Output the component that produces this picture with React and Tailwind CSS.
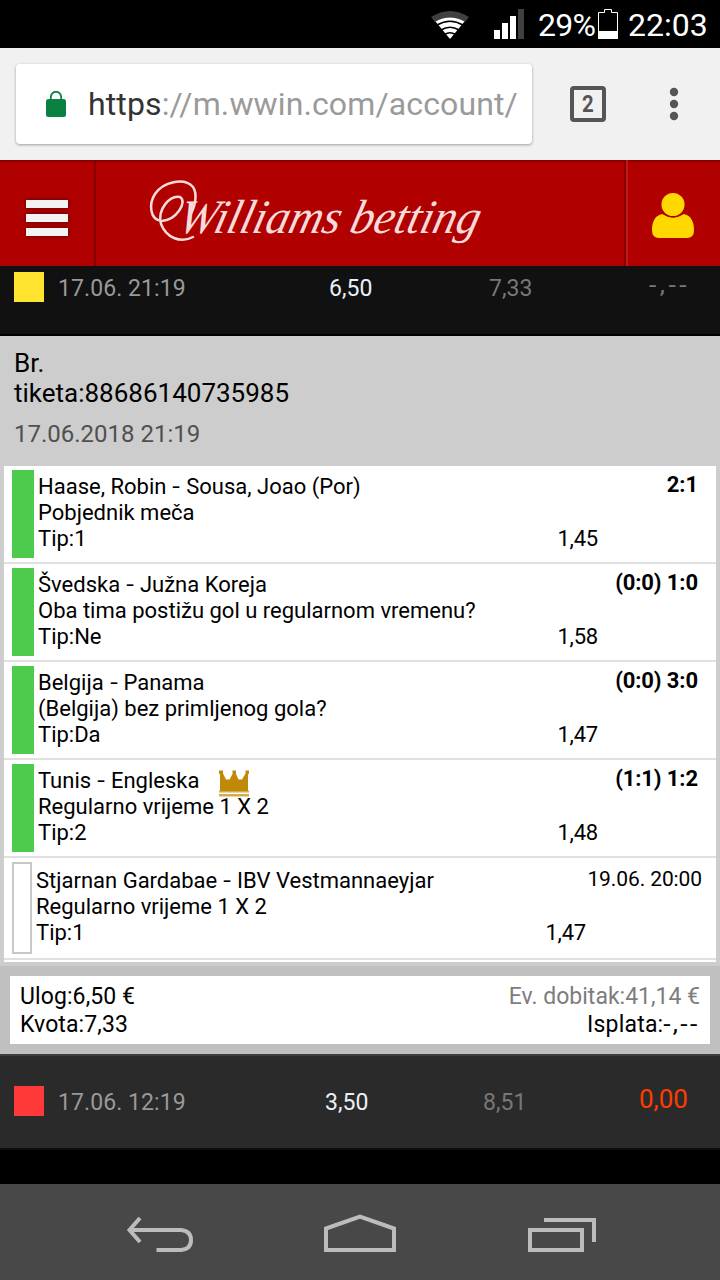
import React from 'react';

const bets = [
    { id: 1, match: "Haase, Robin - Sousa, Joao (Por)", game: "Pobjednik meča", tip: "1", odd: "1,45", result: "2:1" },
    { id: 2, match: "Švedska - Južna Koreja", game: "Oba tima postižu gol u regularnom vremenu?", tip: "Ne", odd: "1,58", result: "(0:0) 1:0" },
    { id: 3, match: "Belgija - Panama", game: "(Belgija) bez primljenog gola?", tip: "Da", odd: "1,47", result: "(0:0) 3:0" },
    { id: 4, match: "Tunis - Engleska", game: "Regularno vrijeme 1 X 2", tip: "2", odd: "1,48", result: "(1:1) 1:2", crown: true },
    { id: 5, match: "Stjarnan Gardabae - IBV Vestmannaeyjar", game: "Regularno vrijeme 1 X 2", tip: "1", odd: "1,47", date: "19.06. 20:00" },
];

function StatusBar() {
    return (
        <div className="flex h-12 bg-black text-white">
            <svg className="ml-[430px] h-12 w-[106px] shrink-0" viewBox="430 0 106 48">
                <path d="M431 17Q450 5 469 17L465 22Q450 13 435 22Z" fill="#404040" />
                <path d="M450 39L435.500 21.500Q450 13.500 464.500 21.500Z" fill="#fff" />
                <path d="M437 25Q450 17.500 463 25M441 30Q450 24.500 459 30M444.500 34.500Q450 31 455.500 34.500" fill="none" stroke="#000" strokeWidth="1.500" />
                <path d="M494 30h6v9h-6zM502 23h6v16h-6zM510 16h6v23h-6z" fill="#fff" />
                <path d="M518 9h6v30h-6z" fill="#404040" />
            </svg>
            <span className="ml-[2px] w-[59px] whitespace-nowrap text-[32px] leading-[50px] tracking-[-0.7px]">29%</span>
            <svg className="h-12 w-[22px] shrink-0" viewBox="597 0 22 48">
                <path d="M598.500 38.500v-26h6v-3h7v3h6v26z" fill="none" stroke="#fff" />
                <path d="M598 31h20v8h-20z" fill="#fff" />
            </svg>
            <span className="ml-[9px] whitespace-nowrap text-[32px] leading-[50px]">22:03</span>
        </div>
    );
}

function BrowserBar() {
    return (
        <div className="flex h-28 items-center bg-[#f1f1f1] pl-4">
            <div className="flex h-20 w-[516px] items-center rounded bg-white pl-[30px] shadow-[0_1px_3px_rgba(0,0,0,0.35)]">
                <svg className="h-[26px] w-5 shrink-0" viewBox="0 0 20 26">
                    <path d="M4.800 10V6a5.200 5.200 0 0 1 10.400 0v4" fill="none" stroke="#0b8043" strokeWidth="1.800" />
                    <rect y="8" width="20" height="18" rx="2.500" fill="#0b8043" />
                </svg>
                <div className="ml-[22px] whitespace-nowrap text-[32px] leading-10 tracking-[0.12px] text-[#9a9a9a]">
                    <span className="text-[#333]">https</span>://m.wwin.com/account/
                </div>
            </div>
            <div className="ml-[38px] flex h-9 w-9 items-center justify-center rounded-[4px] border-4 border-[#555] text-[24px] font-bold leading-none text-[#555]">
                <span className="scale-x-[0.85]">2</span>
            </div>
            <svg className="ml-[63px] h-9 w-2.5" viewBox="0 0 10 36" fill="#555">
                <circle cx="5" cy="6" r="4.200" />
                <circle cx="5" cy="18" r="4.200" />
                <circle cx="5" cy="30" r="4.200" />
            </svg>
        </div>
    );
}

function Header() {
    return (
        <div className="flex h-[106px] bg-[#b00000] shadow-[inset_0_2px_1px_#8a0000]">
            <button className="flex w-24 flex-col gap-[6px] border-r-2 border-[#850000] pl-[26px] pt-10">
                <span className="h-2 w-[42px] bg-[#f3f3f3] shadow-[0_0_4px_rgba(60,0,0,0.8)]" />
                <span className="h-2 w-[42px] bg-[#f3f3f3] shadow-[0_0_4px_rgba(60,0,0,0.8)]" />
                <span className="h-2 w-[42px] bg-[#f3f3f3] shadow-[0_0_4px_rgba(60,0,0,0.8)]" />
            </button>
            <svg className="h-[106px] w-[528px] shrink-0" viewBox="96 160 528 106" fill="#f7dada">
                <path d="M193 237C180 244 166 237 161 224C157 209 170 195 180 197C188 202 176 220 162 221C149 220 149 203 155 194C163 182 184 177 193 187C198 194 195 208 189 217" fill="none" stroke="#f7dada" strokeWidth="2.500" strokeLinecap="round" />
                <g transform="translate(0 233) skewX(-14)" className="font-['Liberation_Serif',serif] text-[48px] italic">
                    <text x="176" textLength="162" lengthAdjust="spacingAndGlyphs">Williams</text>
                    <text x="348" textLength="129" lengthAdjust="spacingAndGlyphs">betting</text>
                </g>
            </svg>
            <div className="flex flex-1 border-l-2 border-[#850000] shadow-[inset_2px_0_0_#c51616]">
                <svg className="ml-[25px] mt-8 h-12 w-[44px]" viewBox="0 0 44 48">
                    <path d="M11 22C3 24 1 31 1 38Q1 46 8 46H36Q43 46 43 38C43 31 41 24 33 22Q22 29 11 22Z" fill="#ffd800" />
                    <circle cx="22" cy="12.500" r="12.300" fill="#ffd800" stroke="#b00000" strokeWidth="1.500" />
                </svg>
            </div>
        </div>
    );
}

function Crown() {
    return (
        <svg className="ml-[19px] h-8 w-8 shrink-0" viewBox="0 0 32 32" fill="#c08a08">
            <path d="M2 23V6.500L1 5.500V2.500H5V5.500L8 11.500H11.500L14.500 6V2.500H18V6L20.500 11.500H24L27.500 5.500V2.500H31V5.500L30 6.500V23Z" />
            <path d="M1 22.500h30v2h-30zM1 26h30v2.500h-30z" opacity="0.700" />
        </svg>
    );
}

function MatchName({ name }) {
    const [home, away] = name.split(" - ");
    return (
        <span>
            {home} <span className="mx-[1.4px] inline-block scale-x-125">-</span> {away}
        </span>
    );
}

function BetRow({ bet }) {
    const open = !!bet.date;
    return (
        <div className={`flex border-b-2 border-[#e0e0e0] pl-2 pt-1 ${open ? 'h-[102px]' : 'h-[98px]'}`}>
            <div className={open ? 'h-[92px] w-5 border-2 border-[#c8c8c8]' : 'h-[88px] w-[22px] bg-[#4ccb4c]'} />
            <div className={`ml-1 flex-1 whitespace-nowrap text-[22px] leading-[26px] ${open ? 'pt-[6px]' : 'pt-1'}`}>
                <div className="flex h-[26px] justify-between">
                    <div className="flex">
                        <MatchName name={bet.match} />
                        {bet.crown && <Crown />}
                    </div>
                    {open
                        ? <span className="-mt-0.5 mr-[14px] text-[21px] tracking-[-0.1px]">{bet.date}</span>
                        : <span className="-mt-0.5 mr-[18px] font-bold tracking-[-0.1px]">{bet.result}</span>}
                </div>
                <div>{bet.game}</div>
                <div className={`flex justify-between ${open ? 'mr-[130px]' : 'mr-[118px]'}`}>
                    <span>Tip:{bet.tip}</span>
                    <span className="tracking-[-0.2px]">{bet.odd}</span>
                </div>
            </div>
        </div>
    );
}

function Ticket() {
    return (
        <div className="h-[718px] bg-[#cdcdcd]">
            <div className="h-[130px] pl-[14px] pt-3">
                <div className="text-[26px] leading-[30px]">Br.<br />tiketa:88686140735985</div>
                <div className="mt-3 text-[24px] leading-7 text-[#505050]">17.06.2018 21:19</div>
            </div>
            <div className="mx-1 mb-1 h-[496px] bg-white">
                {bets.map((bet) => (
                    <BetRow key={bet.id} bet={bet} />
                ))}
            </div>
            <div className="h-[88px] bg-[#c0c0c0] p-2.5">
                <div className="flex h-[68px] justify-between bg-white px-2.5 pt-[7px] text-[23px] leading-7">
                    <div className="tracking-[0.1px]">Ulog:6,50 €<br />Kvota:7,33</div>
                    <div className="flex flex-col items-end">
                        <span className="text-[#7d7d7d]">Ev. dobitak:41,14 €</span>
                        <span className="tracking-[0.2px]">Isplata:<span className="ml-[5px] inline-block origin-right scale-x-[1.15] tracking-[2px]">-,--</span></span>
                    </div>
                </div>
            </div>
        </div>
    );
}

function NavBar() {
    return (
        <svg className="h-24 w-full bg-[#484849]" viewBox="0 1184 720 96" fill="none" stroke="#bcbcbc" strokeWidth="4">
            <path d="M130 1230H181Q191 1231 191 1240Q191 1249 181 1250H156.500M140 1218L129.500 1230L140 1242" />
            <path d="M326 1250V1228.500L360 1216.500L394 1228.500V1250Z" />
            <path d="M530 1230H582V1250H530ZM544 1220H594V1242" />
        </svg>
    );
}

function App() {
    return (
        <div className="h-[1280px] w-[720px] overflow-hidden bg-black font-[Roboto,sans-serif] text-black">
            <StatusBar />
            <BrowserBar />
            <Header />
            <div className="flex h-[70px] border-b-2 border-black bg-[#111] pl-[14px] pt-[6px] text-[23px] leading-[34px]">
                <div className="h-[30px] w-[30px] bg-[#ffe32e]" />
                <span className="ml-[14px] w-[271px] tracking-[0.08px] text-[#999]">17.06. 21:19</span>
                <span className="w-40 text-[#e8f0f8]">6,50</span>
                <span className="w-40 text-[#777]">7,33</span>
                <span className="-mt-[3px] origin-left scale-x-[1.15] tracking-[3px] text-[#777]">-,--</span>
            </div>
            <Ticket />
            <div className="flex h-24 border-b-2 border-t-2 border-b-[#0d0d0d] border-t-[#3d3d3d] bg-[#2a2a2a] pl-[14px] pt-[30px] text-[23px] leading-[34px]">
                <div className="h-[30px] w-[30px] bg-[#ff3838]" />
                <span className="ml-[14px] w-[267px] tracking-[0.08px] text-[#999]">17.06. 12:19</span>
                <span className="w-[158px] text-[#e8f0f8]">3,50</span>
                <span className="w-[156px] text-[#777]">8,51</span>
                <span className="-mt-1 text-[26px] text-[#ff3c00]">0,00</span>
            </div>
            <div className="h-[34px]" />
            <NavBar />
        </div>
    );
}

export default App;
